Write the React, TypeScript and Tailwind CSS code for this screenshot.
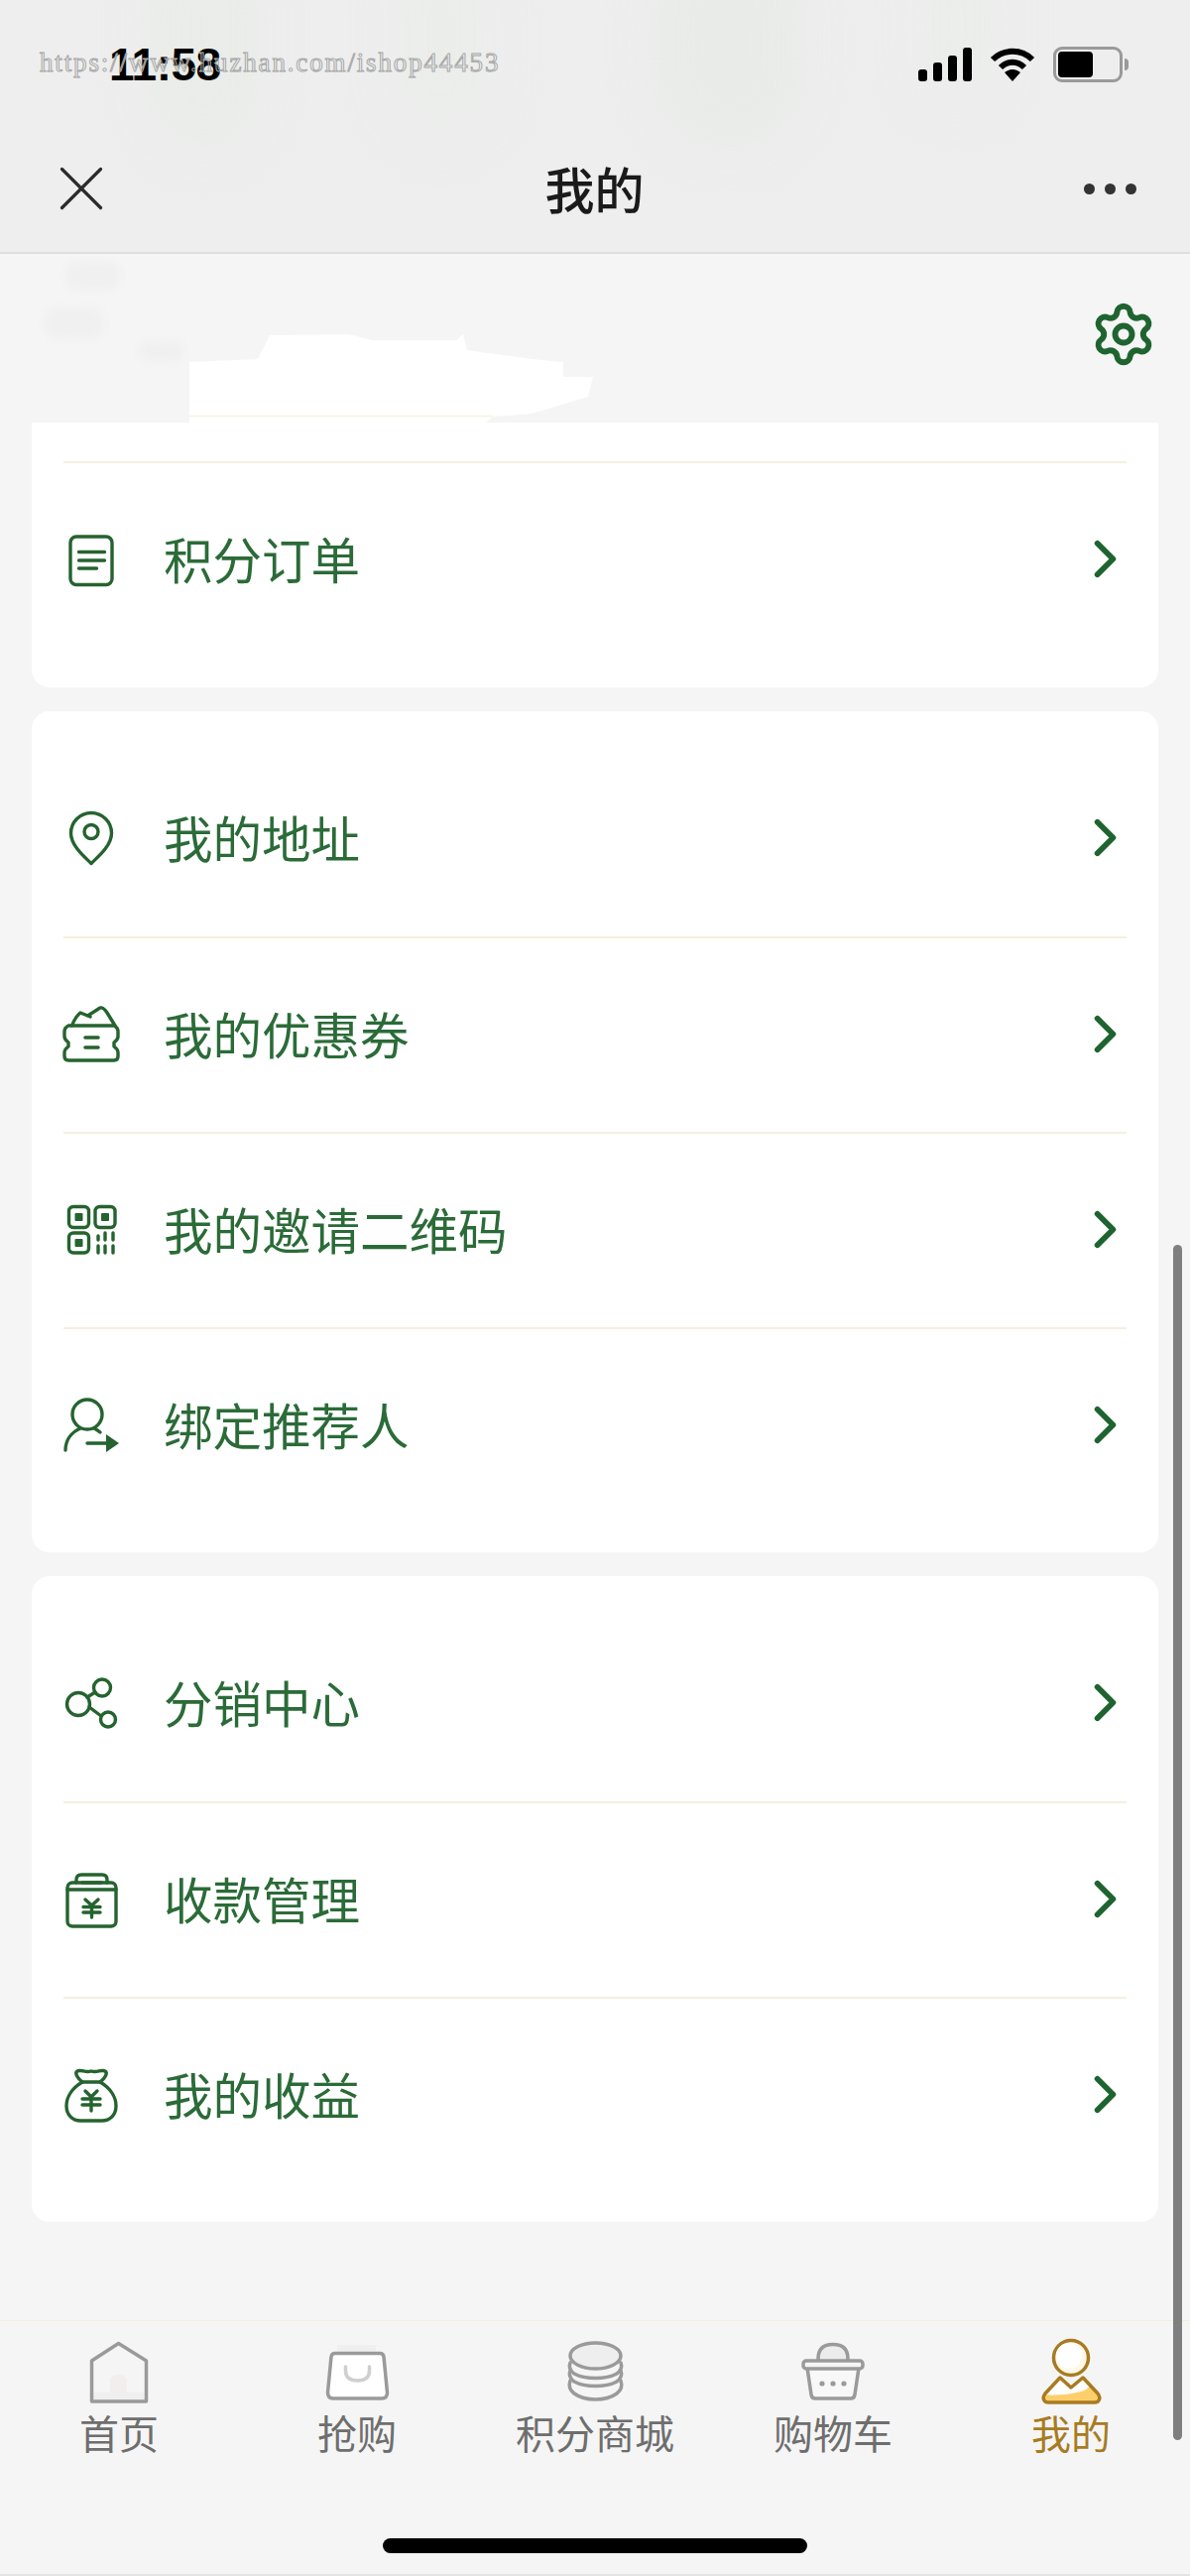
import { ChevronRight, Settings, X } from "lucide-react";
import type { ReactNode } from "react";

const cjk = "font-['Noto_Sans_CJK_SC','Liberation_Sans',sans-serif]";

function Glyph({ children }: { children: ReactNode }) {
  return (
    <svg
      viewBox="0 0 56 56"
      fill="none"
      stroke="#25632f"
      strokeWidth="3.4"
      strokeLinecap="round"
      strokeLinejoin="round"
      className="w-14 h-14 shrink-0 overflow-visible"
    >
      {children}
    </svg>
  );
}

const DocIcon = () => (
  <Glyph>
    <rect x="7" y="4" width="42" height="48.5" rx="6" />
    <path d="M15.5 19.5H41.5M15.5 28H41.5M15.5 36H33.5" />
  </Glyph>
);

const PinIcon = () => (
  <Glyph>
    <path d="M28 52.5C22 46.5 7.5 35 7.5 22A20.5 20.5 0 0 1 48.5 22C48.5 35 34 46.5 28 52.5Z" />
    <circle cx="28" cy="20.5" r="7" />
  </Glyph>
);

const CouponIcon = () => (
  <Glyph>
    <path d="M5 18H51Q55 20 55 24V29Q55 32 51 35V39Q55 42 55 45V49Q55 53 51 53H5Q1 53 1 49V45Q1 42 5 39V35Q1 32 1 29V24Q1 20 5 18Z" />
    <path d="M8.5 18Q12 9 17 5L27 9M24.5 8L37 0Q40 -1 44 5L52 18" />
    <path d="M22 30H35M22 40H35" strokeWidth="3.6" />
  </Glyph>
);

const QrIcon = () => (
  <Glyph>
    <rect x="5.5" y="3.5" width="20" height="21" rx="4.5" />
    <rect x="32" y="3.5" width="20" height="21" rx="4.5" />
    <rect x="5.5" y="30" width="20" height="20" rx="4.5" />
    <rect x="11.5" y="10" width="8" height="8" fill="#25632f" stroke="none" rx="1" />
    <rect x="38" y="10" width="8" height="8" fill="#25632f" stroke="none" rx="1" />
    <rect x="11.5" y="36" width="8" height="8" fill="#25632f" stroke="none" rx="1" />
    <path d="M35 33V37M35 43V50M42 30V37M42 43V50M50 30V37M50 43V50" />
  </Glyph>
);

const UserArrowIcon = () => (
  <Glyph>
    <circle cx="24" cy="16" r="15" />
    <path d="M2 52C2 42 8 34 17 30M31 30Q34 31.5 37 34" />
    <path d="M24 45H44" />
    <path d="M43 36L56 45L43 54Z" fill="#25632f" stroke="none" />
  </Glyph>
);

const ShareIcon = () => (
  <Glyph>
    <circle cx="15" cy="28" r="11.5" />
    <circle cx="39" cy="11.5" r="8.5" />
    <circle cx="45" cy="43.5" r="7.5" />
    <path d="M24 21L32 16M26 31L38 40" />
  </Glyph>
);

const CashBoxIcon = () => (
  <Glyph>
    <rect x="4" y="10" width="49" height="44" rx="5" />
    <path d="M13 10V7Q13 2 18 2H39Q44 2 44 7V10M19 10H38M4 17H53" />
    <path d="M22 27L28.5 33L35 27M28.5 33V45M20 34.5H37M20 40H37" />
  </Glyph>
);

const MoneyBagIcon = () => (
  <Glyph>
    <path d="M19 14C9 20 3 29 3 38C3 48 10 53 17 53H39C46 53 53 48 53 38C53 29 47 20 37 14Z" />
    <path d="M19 14C14 10 11 5 14 3C18 1 22 5 28 3C34 5 38 1 42 3C45 5 42 10 37 14" />
    <path d="M22 23L28 29L34 23M28 29V43M19 31H37M19 37H37" />
  </Glyph>
);

type Item = { label: string; icon: ReactNode };

function Row({ item, first }: { item: Item; first?: boolean }) {
  return (
    <div
      className={`h-[197px] flex items-center ${
        first ? "" : "border-t-2 border-[#f6efe0]"
      }`}
    >
      {item.icon}
      <span
        className={`${cjk} ml-[45px] pb-[3px] text-[49.5px] leading-none text-[#2b6b38] flex-1`}
      >
        {item.label}
      </span>
      <ChevronRight
        size={63}
        strokeWidth={2.2}
        className="text-[#1f6430] -mr-[10px] -mt-[3px]"
      />
    </div>
  );
}

const addressGroup: Item[] = [
  { label: "我的地址", icon: <PinIcon /> },
  { label: "我的优惠券", icon: <CouponIcon /> },
  { label: "我的邀请二维码", icon: <QrIcon /> },
  { label: "绑定推荐人", icon: <UserArrowIcon /> },
];

const moneyGroup: Item[] = [
  { label: "分销中心", icon: <ShareIcon /> },
  { label: "收款管理", icon: <CashBoxIcon /> },
  { label: "我的收益", icon: <MoneyBagIcon /> },
];

function TabSvg({ children }: { children: ReactNode }) {
  return (
    <svg
      viewBox="0 0 70 70"
      fill="none"
      stroke="#9a9a9a"
      strokeWidth="3.5"
      strokeLinecap="round"
      strokeLinejoin="round"
      className="w-[70px] h-[70px]"
    >
      {children}
    </svg>
  );
}

const tabs = [
  {
    label: "首页",
    icon: (
      <TabSvg>
        <path d="M8 57H62V65H8Z" fill="#efefef" stroke="none" />
        <path d="M26 57V47Q26 39 34.5 39Q43 39 43 47V57Z" fill="#f0efee" stroke="none" />
        <path d="M34.5 7.5L62.5 25V66H7.5V25Z" />
      </TabSvg>
    ),
  },
  {
    label: "抢购",
    icon: (
      <TabSvg>
        <rect x="15" y="9" width="39" height="8" fill="#efefef" stroke="none" />
        <path
          d="M13 17.5H58Q61.5 17.5 62 21L65.5 57Q65.5 63 60 63H11Q5.5 63 5.5 57L9 21Q9.5 17.5 13 17.5Z"
          fill="#ffffff"
        />
        <path d="M23.5 31V35Q23.5 45 35.5 45Q47.5 45 47.5 35V31" stroke="#cfcfcf" />
      </TabSvg>
    ),
  },
  {
    label: "积分商城",
    icon: (
      <TabSvg>
        <ellipse cx="35.5" cy="20" rx="25.5" ry="13" fill="#efeeee" />
        <path d="M10 27C8 32 10 35 14 38C25 44 46 44 57 38C61 35 63 32 61 27" />
        <path d="M10 35C8 40 10 43 14 46C25 52 46 52 57 46C61 43 63 40 61 35" />
        <path d="M10 45C8 51 10 55 14 58C25 66 46 66 57 58C61 55 63 51 61 45" />
      </TabSvg>
    ),
  },
  {
    label: "购物车",
    icon: (
      <TabSvg>
        <path d="M20 25V23Q20 8.5 35 8.5Q50 8.5 50 23V25" fill="#ececec" />
        <path d="M9 32L13 59Q13.5 63 17 63H53Q56.5 63 57 59L61 32Z" fill="#f8f8f8" />
        <rect x="5" y="25" width="60" height="8" rx="3" fill="#f5f5f5" />
        <circle cx="24" cy="48" r="2.6" fill="#9a9a9a" stroke="none" />
        <circle cx="35" cy="48" r="2.6" fill="#9a9a9a" stroke="none" />
        <circle cx="46" cy="48" r="2.6" fill="#9a9a9a" stroke="none" />
      </TabSvg>
    ),
  },
  {
    label: "我的",
    active: true,
    icon: (
      <TabSvg>
        <path
          d="M35 52L24 42L9 58Q6 62 8 65Q9 67 12 67H59Q62 67 63 65Q65 62 62 58L47 42Z"
          fill="#fdcf6b"
          stroke="none"
        />
        <path d="M35 52L24 42L9 59Q25 61 45 56Q52 54 54 50L47 42Z" fill="#ffffff" stroke="none" />
        <path
          d="M35 52L24 42L9 58Q6 62 8 65Q9 67 12 67H59Q62 67 63 65Q65 62 62 58L47 42Z"
          stroke="#a87b22"
        />
        <ellipse cx="35" cy="22" rx="17.5" ry="17.5" fill="#fff8e8" stroke="#a87b22" />
        <ellipse cx="33" cy="20" rx="13" ry="13" fill="#ffffff" stroke="none" />
      </TabSvg>
    ),
  },
];

export default function App() {
  return (
    <div className={`relative w-[1200px] h-[2597px] flex flex-col overflow-hidden bg-[#f5f5f5] ${cjk}`}>
      {/* Top bar */}
      <header className="relative h-[256px] shrink-0 bg-[#eeeeee] border-b-2 border-[#dedede] overflow-hidden">
        <div className="absolute left-[150px] -top-[60px] w-[110px] h-[210px] rounded-full bg-[#e9ece9] blur-xl" />
        <div className="absolute left-[390px] -top-[60px] w-[110px] h-[200px] rounded-full bg-[#ebedeb] blur-xl" />
        <div className="absolute left-[660px] -top-[60px] w-[150px] h-[210px] rounded-full bg-[#e8ebe8] blur-xl" />
        <div className="absolute left-[920px] -top-[60px] w-[90px] h-[170px] rounded-full bg-[#ebedeb] blur-xl" />

        {/* Status bar */}
        <div className="relative h-[130px] flex items-start pt-[42px] pl-[110px] pr-[62px]">
          <span className="font-['Liberation_Sans',sans-serif] text-[46px] leading-[46px] font-bold text-black tracking-[-0.5px]">
            11:58
          </span>
          <span className="absolute left-[40px] top-[48px] font-['Liberation_Serif',serif] text-[27px] leading-[30px] tracking-[1.85px] text-transparent [-webkit-text-stroke:1px_#a8a8a8]">
            https://www.huzhan.com/ishop44453
          </span>
          <div className="ml-auto flex items-start gap-[18px] pt-[6px]">
            <svg viewBox="0 0 54 34" className="w-[54px] h-[34px]" fill="#000">
              <rect x="0" y="22" width="9" height="12" rx="3" />
              <rect x="15" y="15" width="9" height="19" rx="3" />
              <rect x="30" y="8" width="9" height="26" rx="3" />
              <rect x="45" y="0" width="9" height="34" rx="3" />
            </svg>
            <svg viewBox="0 0 46 34" className="w-[46px] h-[34px]" fill="none" stroke="#000" strokeWidth="6">
              <path d="M3 12C14 1 32 1 43 12" />
              <path d="M11 20C18 13 28 13 35 20" />
              <path d="M23 34L15 25C20 21 26 21 31 25Z" fill="#000" stroke="none" />
            </svg>
            <div className="flex items-center gap-[2px] -mt-[1px]">
              <div className="w-[70px] h-[36px] rounded-[9px] border-[3px] border-[#9a9a9a] p-[2px]">
                <div className="w-[35px] h-full rounded-[4px] bg-black" />
              </div>
              <div className="w-[4px] h-[12px] rounded-r-full bg-[#9a9a9a]" />
            </div>
          </div>
        </div>

        {/* Nav */}
        <div className="relative h-[124px] flex items-center px-[43px] pb-[4px]">
          <div className="flex-1">
            <X size={78} strokeWidth={1} className="text-[#2a2a2a]" />
          </div>
          <span className="text-[50px] leading-none font-medium text-[#1a1a1a] pb-[2px] pl-[10px]">我的</span>
          <div className="flex-1 flex justify-end gap-[10px] pr-[11px]">
            <div className="w-[11px] h-[11px] rounded-full bg-[#333333]" />
            <div className="w-[11px] h-[11px] rounded-full bg-[#333333]" />
            <div className="w-[11px] h-[11px] rounded-full bg-[#333333]" />
          </div>
        </div>
      </header>

      {/* Profile strip, name painted over in the source */}
      <section className="relative h-[170px] shrink-0 flex items-center justify-end pr-[33px] pb-[8px]">
        <div className="absolute left-[66px] top-[8px] w-[56px] h-[28px] rounded-full bg-[#f0f0f0] blur-[3px]" />
        <div className="absolute left-[44px] top-[54px] w-[62px] h-[32px] rounded-full bg-[#f0f0f0] blur-[3px]" />
        <div className="absolute left-[140px] top-[88px] w-[46px] h-[20px] rounded-full bg-[#f0f0f0] blur-[3px]" />
        <svg viewBox="0 0 420 90" className="absolute left-[190px] top-[80px] w-[420px] h-[90px]" fill="#ffffff">
          <path d="M1 90V29L70 26L82 2L162 1L185 7H270L277 1L281 17L346 26L378 29V44L408 44L403 64L346 81L307 84L300 90Z" />
          <path d="M1 83.5H307" stroke="#f8f1df" strokeWidth="1.5" fill="none" />
        </svg>
        <Settings size={68} strokeWidth={2.1} className="relative text-[#1f6430]" />
      </section>

      {/* Menu cards */}
      <main className="flex-1 flex flex-col gap-6 px-8 min-h-0">
        <div className="bg-white rounded-b-[18px] px-8 pb-[31px]">
          <div className="h-[39px]" />
          <Row item={{ label: "积分订单", icon: <DocIcon /> }} />
        </div>
        <div className="bg-white rounded-[18px] px-8 py-[30px]">
          {addressGroup.map((item, i) => (
            <Row key={item.label} item={item} first={i === 0} />
          ))}
        </div>
        <div className="bg-white rounded-[18px] px-8 py-[30px]">
          {moneyGroup.map((item, i) => (
            <Row key={item.label} item={item} first={i === 0} />
          ))}
        </div>
      </main>

      {/* Tab bar */}
      <footer className="h-[258px] shrink-0 border-t-[1.5px] border-b-2 border-t-[#f3eee0] border-b-[#e4e4e4] flex flex-col items-center">
        <nav className="w-full grid grid-cols-5 pt-[15px]">
          {tabs.map((tab) => (
            <div key={tab.label} className="flex flex-col items-center">
              {tab.icon}
              <span
                className={`mt-[7px] text-[40px] leading-[40px] ${
                  tab.active ? "text-[#a87b22]" : "text-[#6e6e6e]"
                }`}
              >
                {tab.label}
              </span>
            </div>
          ))}
        </nav>
        <div className="mt-[87px] w-[428px] h-[15px] rounded-full bg-black" />
      </footer>

      {/* Scrollbar thumb */}
      <div className="absolute left-[1183px] top-[1255px] w-[9px] h-[1205px] rounded-full bg-[#7f7f7f]" />
    </div>
  );
}
